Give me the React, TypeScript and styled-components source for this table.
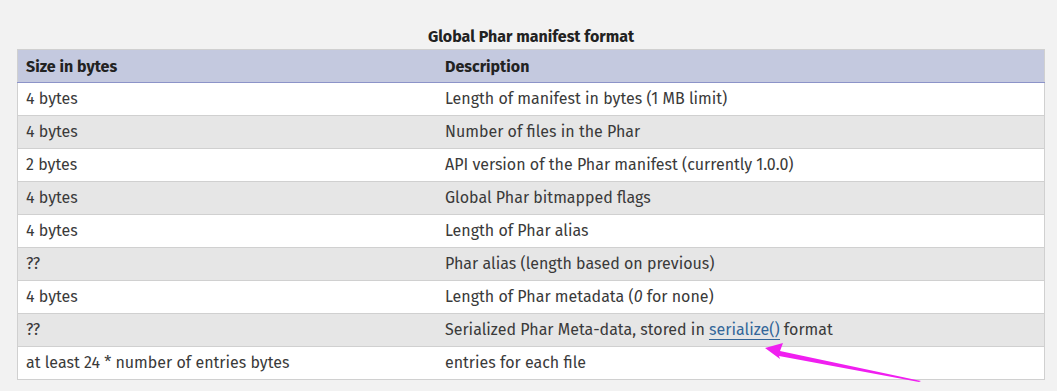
import React from "react";
import styled, { createGlobalStyle } from "styled-components";

const Global = createGlobalStyle`
  html, body { margin: 0; padding: 0; background: #f2f2f2; }
  body { font-family: "Fira Sans", "Open Sans", "Noto Sans", sans-serif; color: #333; }
`;

const Page = styled.div`
  position: relative;
  padding: 26px 12px 0 17px;
  width: 1057px;
  height: 391px;
  box-sizing: border-box;
`;

const Table = styled.table`
  width: 1028px;
  border-collapse: collapse;
  border: 1px solid #d0d0d0;
  font-size: 16px;
`;

const Caption = styled.caption`
  font-weight: bold;
  font-size: 16px;
  line-height: 22px;
  color: #222;
  padding-bottom: 1px;
`;

const HeadCell = styled.th<{ w?: string }>`
  background: #c4c9df;
  border-bottom: 1px solid #8c93c8;
  text-align: left;
  font-weight: bold;
  height: 32px;
  padding: 0 8px;
  font-size: 16px;
  color: #222;
  width: ${(p) => p.w || "auto"};
`;

const Row = styled.tr<{ alt: boolean }>`
  background: ${(p) => (p.alt ? "#e6e6e6" : "#ffffff")};
  border-top: 1px solid #d0d0d0;
`;

const Cell = styled.td`
  height: 32px;
  padding: 0 8px;
  vertical-align: middle;
  line-height: 20px;
  color: #3a3a3a;
`;

const Link = styled.a`
  color: #336699;
  text-decoration: none;
  border-bottom: 1px solid #336699;
`;

const Arrow = styled.svg`
  position: absolute;
  left: 0;
  top: 0;
  pointer-events: none;
`;

const rows: [React.ReactNode, React.ReactNode][] = [
  ["4 bytes", "Length of manifest in bytes (1 MB limit)"],
  ["4 bytes", "Number of files in the Phar"],
  ["2 bytes", "API version of the Phar manifest (currently 1.0.0)"],
  ["4 bytes", "Global Phar bitmapped flags"],
  ["4 bytes", "Length of Phar alias"],
  ["??", "Phar alias (length based on previous)"],
  ["4 bytes", <>Length of Phar metadata (<em>0</em> for none)</>],
  ["??", <>Serialized Phar Meta-data, stored in <Link href="#">serialize()</Link> format</>],
  ["at least 24 * number of entries bytes", "entries for each file"],
];

export default function App() {
  return (
    <Page>
      <Global />
      <Table>
        <Caption>Global Phar manifest format</Caption>
        <thead>
          <tr>
            <HeadCell w="403px">Size in bytes</HeadCell>
            <HeadCell>Description</HeadCell>
          </tr>
        </thead>
        <tbody>
          {rows.map((r, i) => (
            <Row key={i} alt={i % 2 === 1}>
              <Cell>{r[0]}</Cell>
              <Cell>{r[1]}</Cell>
            </Row>
          ))}
        </tbody>
      </Table>
      <Arrow width="1057" height="391" viewBox="0 0 1057 391">
        <polygon points="765,348 783,343 780,351 921,381 919,382 779,356 780,359" fill="#f01ff0" />
      </Arrow>
    </Page>
  );
}
